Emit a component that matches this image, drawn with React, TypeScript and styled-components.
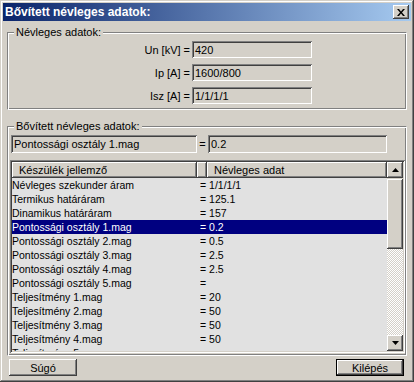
import styled, { createGlobalStyle } from 'styled-components';

const GlobalStyle = createGlobalStyle`
  html, body {
    margin: 0;
    padding: 0;
    background: #d4d0c8;
  }
  body {
    font-family: "Liberation Sans", Arial, sans-serif;
    font-size: 11px;
    color: #000;
  }
`;

const rows: [string, string][] = [
  ['Névleges szekunder áram', '1/1/1/1'],
  ['Termikus határáram', '125.1'],
  ['Dinamikus határáram', '157'],
  ['Pontossági osztály 1.mag', '0.2'],
  ['Pontossági osztály 2.mag', '0.5'],
  ['Pontossági osztály 3.mag', '2.5'],
  ['Pontossági osztály 4.mag', '2.5'],
  ['Pontossági osztály 5.mag', ''],
  ['Teljesítmény 1.mag', '20'],
  ['Teljesítmény 2.mag', '50'],
  ['Teljesítmény 3.mag', '50'],
  ['Teljesítmény 4.mag', '50'],
  ['Teljesítmény 5.mag', ''],
];

const ratings = [
  { label: 'Un [kV] =', value: '420' },
  { label: 'Ip [A] =', value: '1600/800' },
  { label: 'Isz [A] =', value: '1/1/1/1' },
];

const SELECTED = 3;

const App = () => {
  return (
    <>
      <GlobalStyle />
      <Window>
        <TitleBar>
          <Title>Bővített névleges adatok:</Title>
          <CloseButton>
            <svg width="8" height="7" viewBox="0 0 8 7">
              <path d="M0 0h2l2 2.5L6 0h2L5 3.5 8 7H6L4 4.5 2 7H0l3-3.5z" fill="#000" />
            </svg>
          </CloseButton>
        </TitleBar>
        <Body>
          <GroupBox $height={78}>
            <Legend>Névleges adatok:</Legend>
            <RatingList>
              {ratings.map((r) => (
                <RatingRow key={r.label}>
                  <RatingLabel>{r.label}</RatingLabel>
                  <Field $width={120}>{r.value}</Field>
                </RatingRow>
              ))}
            </RatingList>
          </GroupBox>

          <GroupBox $height={230} $gap={16}>
            <Legend>Bővített névleges adatok:</Legend>
            <SelectedRow>
              <Field $width={186} $height={18}>{rows[SELECTED][0]}</Field>
              <Equals>=</Equals>
              <Field $width={179} $height={18}>{rows[SELECTED][1]}</Field>
            </SelectedRow>
            <ListBox>
              <ListMain>
                <Header>
                  <HeaderCell $width={185}>Készülék jellemző</HeaderCell>
                  <HeaderCell $width={10} />
                  <HeaderCell $fill>Névleges adat</HeaderCell>
                </Header>
                <Rows>
                  {rows.map(([name, value], i) => (
                    <Row key={name} $selected={i === SELECTED}>
                      <Cell>{name}</Cell>
                      <Cell>= {value}</Cell>
                    </Row>
                  ))}
                </Rows>
              </ListMain>
              <ScrollBar>
                <ArrowButton>
                  <svg width="7" height="4" viewBox="0 0 7 4">
                    <path d="M3.5 0L7 4H0z" fill="#000" />
                  </svg>
                </ArrowButton>
                <Thumb />
                <Track />
                <ArrowButton>
                  <svg width="7" height="4" viewBox="0 0 7 4">
                    <path d="M0 0h7L3.5 4z" fill="#000" />
                  </svg>
                </ArrowButton>
              </ScrollBar>
            </ListBox>
          </GroupBox>

          <ButtonBar>
            <Button>Súgó</Button>
            <Button $default>Kilépés</Button>
          </ButtonBar>
        </Body>
      </Window>
    </>
  );
};

export default App;

const raised = `
  box-shadow: inset -1px -1px #404040, inset 1px 1px #fff,
    inset -2px -2px #808080, inset 2px 2px #d4d0c8;
`;

const sunken = `
  box-shadow: inset 1px 1px #808080, inset -1px -1px #fff,
    inset 2px 2px #404040, inset -2px -2px #d4d0c8;
`;

const Window = styled.div`
  width: 414px;
  height: 382px;
  box-sizing: border-box;
  padding: 3px;
  background: #d4d0c8;
  display: flex;
  flex-direction: column;
  overflow: hidden;
  box-shadow: inset -1px -1px #404040, inset 1px 1px #d4d0c8,
    inset -2px -2px #808080, inset 2px 2px #fff;
`;

const TitleBar = styled.div`
  flex: 0 0 18px;
  display: flex;
  align-items: center;
  justify-content: space-between;
  padding: 0 2px;
  background: linear-gradient(to right, #0a246a, #a6caf0);
`;

const Title = styled.span`
  color: #fff;
  font-weight: bold;
  font-size: 12px;
`;

const CloseButton = styled.div`
  width: 16px;
  height: 14px;
  display: flex;
  align-items: center;
  justify-content: center;
  background: #d4d0c8;
  ${raised}
`;

const Body = styled.div`
  flex: 1;
  min-height: 0;
  display: flex;
  flex-direction: column;
  padding: 11px 4px 0 4px;
`;

const GroupBox = styled.div<{ $height: number; $gap?: number }>`
  position: relative;
  flex: 0 0 ${(p) => p.$height}px;
  min-height: 0;
  box-sizing: border-box;
  margin-top: ${(p) => p.$gap ?? 0}px;
  border: 1px solid #808080;
  border-right-color: #fff;
  border-bottom-color: #fff;
  box-shadow: inset 1px 1px #fff, inset -1px -1px #808080;
  padding: 8px 1px 2px 2px;
  display: flex;
  flex-direction: column;
`;

const Legend = styled.span`
  position: absolute;
  top: -8px;
  left: 6px;
  padding: 0 2px;
  background: #d4d0c8;
  font-size: 11px;
  line-height: 14px;
`;

const RatingList = styled.div`
  display: flex;
  flex-direction: column;
  gap: 6px;
`;

const RatingRow = styled.div`
  display: flex;
  align-items: center;
`;

const RatingLabel = styled.span`
  width: 182px;
  box-sizing: border-box;
  text-align: right;
  padding-right: 2px;
`;

const Field = styled.div<{ $width: number; $height?: number }>`
  width: ${(p) => p.$width}px;
  height: ${(p) => p.$height ?? 17}px;
  box-sizing: border-box;
  padding: 2px 3px 0 3px;
  background: #d4d0c8;
  line-height: ${(p) => (p.$height ?? 17) - 3}px;
  white-space: nowrap;
  ${sunken}
`;

const SelectedRow = styled.div`
  display: flex;
  align-items: center;
  padding-left: 1px;
  margin-bottom: 7px;
`;

const Equals = styled.span`
  width: 11px;
  text-align: center;
`;

const ListBox = styled.div`
  flex: 1;
  min-height: 0;
  display: flex;
  padding: 2px;
  ${sunken}
`;

const ListMain = styled.div`
  flex: 1;
  min-width: 0;
  display: flex;
  flex-direction: column;
  background: #e1e1e1;
`;

const Header = styled.div`
  flex: 0 0 16px;
  display: flex;
  background: #d4d0c8;
`;

const HeaderCell = styled.div<{ $width?: number; $fill?: boolean }>`
  ${(p) => (p.$fill ? 'flex: 1;' : `width: ${p.$width}px;`)}
  box-sizing: border-box;
  padding: 1px 0 0 7px;
  line-height: 14px;
  white-space: nowrap;
  ${raised}
`;

const Rows = styled.div`
  flex: 1;
  min-height: 0;
  overflow: hidden;
`;

const Row = styled.div<{ $selected?: boolean }>`
  display: grid;
  grid-template-columns: 188px 1fr;
  height: 14px;
  line-height: 14px;
  font-size: 10.5px;
  white-space: nowrap;
  background: ${(p) => (p.$selected ? '#000080' : 'transparent')};
  color: ${(p) => (p.$selected ? '#fff' : '#000')};
`;

const Cell = styled.span`
  overflow: hidden;
`;

const ScrollBar = styled.div`
  width: 16px;
  display: flex;
  flex-direction: column;
`;

const ArrowButton = styled.div`
  flex: 0 0 16px;
  display: flex;
  align-items: center;
  justify-content: center;
  background: #d4d0c8;
  ${raised}
`;

const Thumb = styled.div`
  flex: 0 0 70px;
  margin-top: 1px;
  background: #d4d0c8;
  ${raised}
`;

const Track = styled.div`
  flex: 1;
  background: repeating-conic-gradient(#d4d0c8 0 25%, #fff 0 50%) 0 0 / 2px 2px;
`;

const ButtonBar = styled.div`
  flex: 0 0 17px;
  margin-top: 3px;
  display: flex;
  justify-content: space-between;
  padding: 0 3px 0 2px;
`;

const Button = styled.div<{ $default?: boolean }>`
  width: 68px;
  height: 17px;
  box-sizing: border-box;
  display: flex;
  align-items: center;
  justify-content: center;
  background: #d4d0c8;
  ${(p) =>
    p.$default
      ? `box-shadow: inset 0 0 0 1px #000, inset -2px -2px #404040, inset 2px 2px #fff,
    inset -3px -3px #808080;`
      : raised}
`;
